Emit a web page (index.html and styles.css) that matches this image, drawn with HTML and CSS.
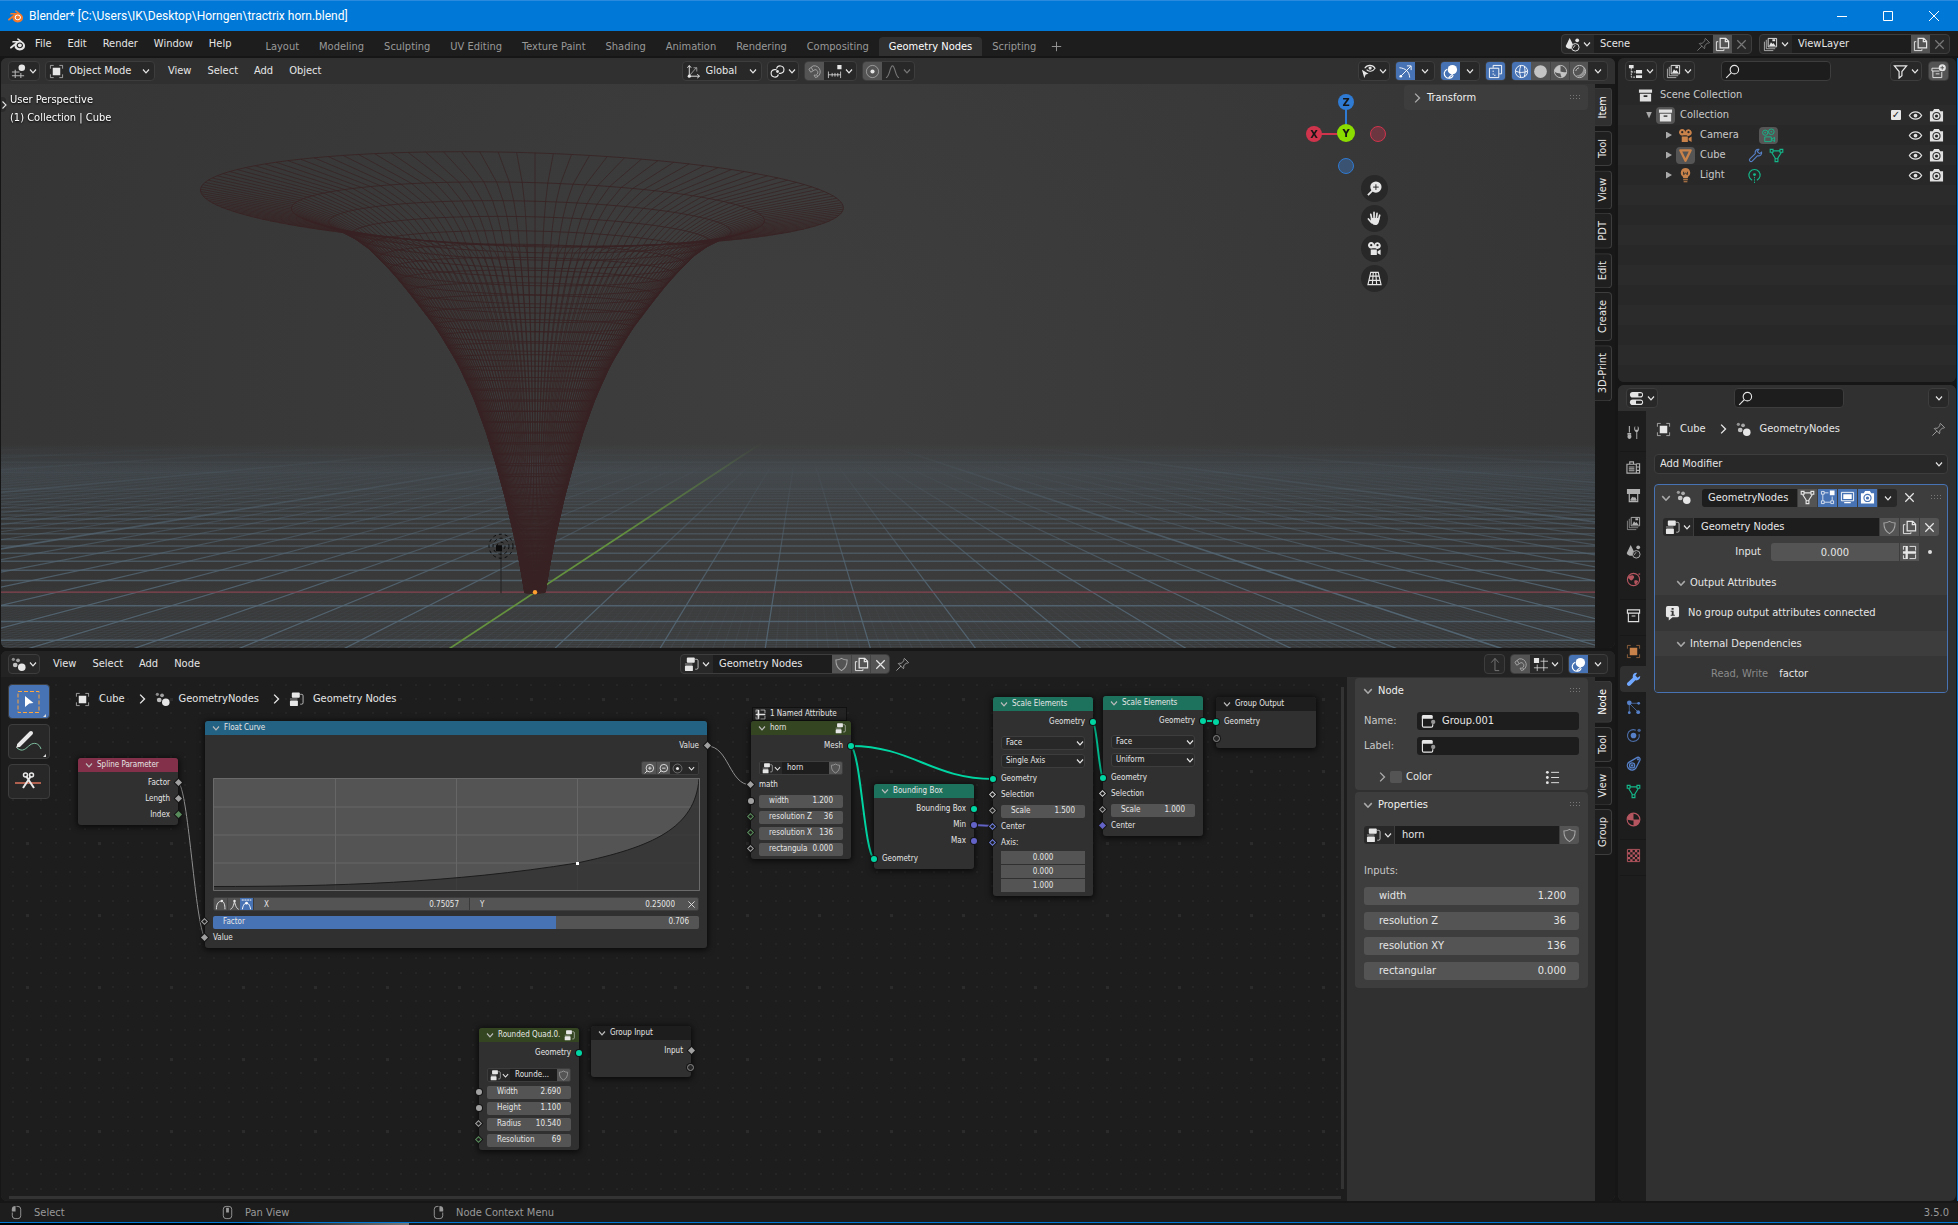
FILE: index.html
```html
<!DOCTYPE html>
<html lang="en">
<head>
  <meta charset="UTF-8">
  <meta name="viewport" content="width=device-width, initial-scale=1.0">
  <title>Blender* [C:\Users\IK\Desktop\Horngen\tractrix horn.blend]</title>
  <link rel="stylesheet" href="styles.css">
</head>
<body>

  <!-- Icon sprite -->
  <svg class="sprite" aria-hidden="true">
    <symbol id="i-blender" viewBox="0 0 24 24" fill="currentColor"><path d="M12.51 13.214c.046-.8.438-1.506 1.03-2.006a3.424 3.424 0 0 1 2.212-.79c.85 0 1.631.3 2.211.79.592.5.983 1.206 1.028 2.005.045.823-.285 1.586-.865 2.153a3.389 3.389 0 0 1-2.374.938 3.393 3.393 0 0 1-2.376-.938c-.58-.567-.91-1.33-.865-2.152M7.35 14.831c.006.314.106.922.256 1.398a7.372 7.372 0 0 0 1.593 2.757 8.227 8.227 0 0 0 2.787 2.001 8.947 8.947 0 0 0 3.66.76 8.964 8.964 0 0 0 3.657-.772 8.285 8.285 0 0 0 2.785-2.01 7.428 7.428 0 0 0 1.592-2.762 6.964 6.964 0 0 0 .25-3.074 7.123 7.123 0 0 0-1.016-2.779 7.764 7.764 0 0 0-1.852-2.043h.002L13.566 2.55l-.02-.015c-.492-.378-1.319-.376-1.86.002-.547.382-.609 1.015-.123 1.415l-.001.001 3.126 2.543-9.53.01h-.013c-.788.001-1.545.518-1.695 1.172-.154.665.38 1.217 1.2 1.22V8.9l4.83-.01-8.62 6.617-.034.025c-.813.622-1.075 1.658-.563 2.313.52.667 1.625.668 2.447.004L7.414 14s-.069.52-.063.831zm12.09 1.741c-.97.988-2.326 1.548-3.795 1.55-1.47.004-2.827-.552-3.797-1.538a4.51 4.51 0 0 1-1.036-1.622 4.282 4.282 0 0 1 .282-3.519 4.702 4.702 0 0 1 1.153-1.371c.942-.768 2.141-1.183 3.396-1.185 1.256-.002 2.455.41 3.398 1.175.48.391.87.854 1.152 1.367a4.28 4.28 0 0 1 .522 1.706 4.236 4.236 0 0 1-.239 1.811 4.54 4.54 0 0 1-1.035 1.626"/></symbol>
    <symbol id="i-down" viewBox="0 0 8 8" fill="none" stroke="currentColor" stroke-width="1.2"><path d="M1 2.5 4 5.8 7 2.5"/></symbol>
    <symbol id="i-right" viewBox="0 0 8 8" fill="none" stroke="currentColor" stroke-width="1.1"><path d="M2.5.5 6 4 2.5 7.5"/></symbol>
    <symbol id="i-x" viewBox="0 0 16 16" fill="none" stroke="currentColor" stroke-width="1.3"><path d="m3.500 3.500 9 9M12.500 3.500l-9 9"/></symbol>
    <symbol id="i-plus" viewBox="0 0 16 16" fill="none" stroke="currentColor"><path d="M8 3v10M3 8h10"/></symbol>
    <symbol id="i-view3d" viewBox="0 0 16 16" fill="none" stroke="currentColor" stroke-width="1.1"><path d="M1 8.500h8M1 12.500h13M4.500 6v9M10.500 9.500v5.500" opacity=".75"/><circle cx="11.500" cy="4" r="3.500" fill="currentColor" stroke="none"/></symbol>
    <symbol id="i-object" viewBox="0 0 16 16" fill="none" stroke="currentColor"><path d="M1.500 5V1.500H5M11 1.500h3.500V5M14.500 11v3.500H11M5 14.500H1.500V11" opacity=".65"/><path d="M4 4h8v8H4z" fill="currentColor" stroke="none"/></symbol>
    <symbol id="i-axes" viewBox="0 0 16 16" fill="none" stroke="currentColor"><path d="M3.500 13V2M1.500 4l2-2.500 2 2.500M3.500 13H14M12 11l2.500 2-2.500 2"/><path d="m4 12 7-8M8 4h3.500v4" opacity=".6"/><circle cx="3.500" cy="13" r="1.700" fill="currentColor" stroke="none"/></symbol>
    <symbol id="i-pivot" viewBox="0 0 16 16" fill="none" stroke="currentColor" stroke-width="1.200"><path d="M7 5a4 4 0 1 1 4.500 5H9.500M9 11.200A4 4 0 1 1 4.500 6H7"/><circle cx="8" cy="8" r="1.500" fill="currentColor" stroke="none"/></symbol>
    <symbol id="i-magnet" viewBox="0 0 16 16" fill="none" stroke="currentColor"><path d="M2 5.500 6.500 2A6 6 0 1 1 9 14.500L7.500 11.800A3 3 0 1 0 8.500 6L4 8.800zM4.500 3.500 6.300 7M10.500 11.500l1 2.500"/></symbol>
    <symbol id="i-incr" viewBox="0 0 16 16" fill="none" stroke="currentColor"><path d="M1.500 8v7M5.500 9.500v4M8.500 9.500v4M11.500 9.500v4M14.500 8v7M1.500 11.500h13" opacity=".8"/><path d="M11 1h4.500v4.500H11z" fill="currentColor" stroke="none"/></symbol>
    <symbol id="i-prop" viewBox="0 0 16 16" fill="none" stroke="currentColor"><circle cx="8" cy="8" r="6.500" opacity=".5"/><circle cx="8" cy="8" r="2.200" fill="currentColor" stroke="none"/></symbol>
    <symbol id="i-falloff" viewBox="0 0 16 16" fill="none" stroke="currentColor" stroke-width="1.200"><path d="M1 14.500c4 0 4-12.500 7-12.500s3 12.500 7 12.500"/></symbol>
    <symbol id="i-vis" viewBox="0 0 16 16" fill="none" stroke="currentColor" stroke-width="1.200"><path d="M4 4.500c2.500-4 8.500-4 11 0-2.500 4-7 4-9 1.500"/><circle cx="9.700" cy="4.300" r="1.700" fill="currentColor" stroke="none"/><path d="m1 6 7 4.500-3 .8L3.500 15z" fill="currentColor" stroke="none"/></symbol>
    <symbol id="i-gizmo" viewBox="0 0 16 16" fill="none" stroke="currentColor"><path d="M1.500 4C8 4.500 12 8 12.500 14.500M2 14 13.500 2.500M9.500 2h4.500v4.500"/><circle cx="3" cy="13" r="1.400" fill="currentColor" stroke="none"/></symbol>
    <symbol id="i-overlay" viewBox="0 0 16 16" fill="none" stroke="currentColor" stroke-width="1.200"><circle cx="10" cy="6" r="5" fill="currentColor" stroke="none"/><path d="M4.500 5.500A5 5 0 1 0 11 12M6 14.500l4.500-4" /></symbol>
    <symbol id="i-xray" viewBox="0 0 16 16" fill="none" stroke="currentColor"><path d="M5.500 4V1.500h9v9H12M1.500 4.500h10v10h-10z"/><path d="M5.500 7v5h4" stroke-dasharray="1.500 1.500"/></symbol>
    <symbol id="i-wire" viewBox="0 0 16 16" fill="none" stroke="currentColor"><circle cx="8" cy="8" r="6.500"/><path d="M1.500 7.500c4 2 9 2 13 0M7.500 1.500c-2 4-2 9 0 13M11 2.500c1 3 1 8 0 11" /></symbol>
    <symbol id="i-solid" viewBox="0 0 16 16" fill="#c4c4c4"><circle cx="8" cy="8" r="6.800"/></symbol>
    <symbol id="i-mat" viewBox="0 0 16 16" fill="none" stroke="#c4c4c4"><circle cx="8" cy="8" r="6.500"/><path d="M8 8V1.500A6.500 6.500 0 0 0 1.500 8c2 1.500 4 2 6.500 2 0 2 1 4 2.500 4.500 2-1 4-3 4-6C13 9 10 9 8 8z" fill="#c4c4c4" stroke="none"/></symbol>
    <symbol id="i-rend" viewBox="0 0 16 16" fill="none" stroke="#c4c4c4"><circle cx="8" cy="8" r="6.500"/><path d="M12 3a6 6 0 1 1-8 9c5 1 9-4 8-9z" fill="#c4c4c4" stroke="none" opacity=".6"/><path d="M4 7.500c.5-2 2-3 3.500-3.500"/></symbol>
    <symbol id="i-scene" viewBox="0 0 16 16" fill="none" stroke="currentColor"><path d="M5 1 .8 9.500c0 3 6.200 4 7.200 2L8.500 8z" fill="currentColor" stroke="none"/><circle cx="13" cy="3.500" r="2" fill="currentColor" stroke="none"/><circle cx="11" cy="11" r="4" fill="#262626"/><path d="M9 11.500c.2-1.200.8-2 2-2.300"/></symbol>
    <symbol id="i-pin" viewBox="0 0 16 16" fill="none" stroke="currentColor"><path d="m1.500 14.500 5-5M3.500 7l5.500 5.500c.5-1 .5-2 .2-3L12 6.500c1 .2 2 0 2.500-.5L10 1.500c-.5.500-.7 1.500-.5 2.500L6.500 6.800c-1-.3-2-.3-3 .2z"/></symbol>
    <symbol id="i-dup" viewBox="0 0 16 16" fill="none" stroke="currentColor"><path d="M3.500 5h-2v9.500h8V13"/><path d="M5.500 1.500h6l3 3v7h-9zM11 1.500V5h3.500" stroke-width="1.300"/></symbol>
    <symbol id="i-layers" viewBox="0 0 16 16" fill="none" stroke="currentColor"><path d="M1.500 5v9.500H11M3.500 3v9.500H13" opacity=".7"/><path d="M5.500 1.500h9v9h-9z"/><path d="m6.500 9.500 2-4 1.500 2 1-1 2.500 3zM10 2.500h3v2h-3z" fill="currentColor" stroke="none"/></symbol>
    <symbol id="i-tree" viewBox="0 0 16 16" fill="currentColor"><path d="M1 1h5v3.500H1zM8.500 6.500H15V10H8.500zM8.500 12H15v3H8.500z"/><path d="M3.500 4v10H8M3.500 8.500H8" fill="none" stroke="currentColor" stroke-dasharray="2 1"/></symbol>
    <symbol id="i-search" viewBox="0 0 16 16" fill="none" stroke="currentColor" stroke-width="1.200"><circle cx="10" cy="6" r="4.500"/><path d="m6.800 9.200-5.500 5.500"/></symbol>
    <symbol id="i-filter" viewBox="0 0 16 16" fill="none" stroke="currentColor" stroke-width="1.300"><path d="M1.500 2h13l-5 6v4.500L6.500 15V8z"/></symbol>
    <symbol id="i-newcoll" viewBox="0 0 16 16" fill="none" stroke="currentColor"><path d="M9 4.500H1v3h8M2 7.500v7h9.500v-6M5 10.500h4"/><circle cx="12" cy="4" r="3.800" fill="currentColor" stroke="none"/><path d="M12 2v4M10 4h4" stroke="#555"/></symbol>
    <symbol id="i-coll" viewBox="0 0 16 16" fill="currentColor"><path d="M1 1.500h14v3.500H1z"/><path fill-rule="evenodd" d="M2 6h12v8.500H2zm4 1.800v1.700h4V7.800z"/></symbol>
    <symbol id="i-archive" viewBox="0 0 16 16" fill="none" stroke="currentColor" stroke-width="1.200"><path d="M1.500 2h13v3.500h-13zM2.500 5.500v9h11v-9M6 8.500h4"/></symbol>
    <symbol id="i-cam" viewBox="0 0 16 16" fill="currentColor"><path fill-rule="evenodd" d="M4.500 1a3.500 3.500 0 1 0 1.500 6.700h3A3.500 3.500 0 1 0 7.700 4.500 3.500 3.500 0 0 0 4.500 1zm0 2.300a1.200 1.200 0 1 1 0 2.400 1.200 1.200 0 0 1 0-2.400zm6.700 0a1.200 1.200 0 1 1 0 2.400 1.200 1.200 0 0 1 0-2.400z"/><path d="M4 9h6.500v6H4zM11.300 11l3.200-2v6l-3.200-2z"/></symbol>
    <symbol id="i-camdata" viewBox="0 0 16 16" fill="none" stroke="currentColor"><circle cx="4.500" cy="5" r="2.800"/><circle cx="11" cy="4" r="3"/><circle cx="4.500" cy="5" r=".5"/><circle cx="11" cy="4" r=".5"/><path d="M4 9.500h7v5H4zM11 12l3.500-2v4.500z"/></symbol>
    <symbol id="i-objmesh" viewBox="0 0 16 16" fill="none" stroke="currentColor" stroke-width="2.500"><path d="M2.500 2.500h11L8 13.500z" stroke-linejoin="round"/></symbol>
    <symbol id="i-mesh" viewBox="0 0 16 16" fill="none" stroke="currentColor" stroke-width="1.200"><path d="M4.500 3h7M3 5l4 6.500M13 5l-4 6.500M1.300 1.500h3v3h-3zM11.700 1.500h3v3h-3zM6.500 11.500h3v3h-3z"/></symbol>
    <symbol id="i-wrench" viewBox="0 0 16 16" fill="currentColor"><path d="M15 4.200 12.300 6 10 3.800 11.800 1C9 .4 6.500 3 7.300 6L1.500 11.500c-1.600 2 .8 4.500 3 3L10 8.800c3.200.8 5.700-1.800 5-4.600z"/></symbol>
    <symbol id="i-wrenchline" viewBox="0 0 16 16" fill="none" stroke="currentColor" stroke-width="1.200"><path d="M14.500 4.500 12.300 6 10 3.800 11.500 1.500C9 1 7 3.500 7.800 6L2 11.500c-1.500 1.700.8 4 2.500 2.500L10 8.300c3 .7 5-1.500 4.500-3.800z"/></symbol>
    <symbol id="i-bulb" viewBox="0 0 16 16" fill="currentColor"><path d="M8 0a5 5 0 0 0-3 9l.7 2h4.600L11 9a5 5 0 0 0-3-9z"/><path d="M5.500 12h5v1h-5zM6 14h4v1.200H6z"/><path d="M6 4v3l2-1.500L10 7V4" fill="none" stroke="#2b2b2b"/></symbol>
    <symbol id="i-light" viewBox="0 0 16 16" fill="none" stroke="currentColor"><path d="M5.500 13a6 6 0 1 1 5 0" stroke-width="1.200"/><circle cx="8" cy="7" r="1.500" fill="currentColor" stroke="none"/><path d="M8 9.500v1.500M8 12v1.500M8 14.500V16"/></symbol>
    <symbol id="i-eye" viewBox="0 0 16 16" fill="none" stroke="currentColor" stroke-width="1.400"><path d="M1.500 8C4.500 2.800 11.500 2.800 14.500 8c-3 5.200-10 5.200-13 0z"/><circle cx="8" cy="8" r="2" fill="currentColor" stroke="none"/></symbol>
    <symbol id="i-photo" viewBox="0 0 16 16" fill="currentColor"><path d="M1 3.500h3L5.500 1h5L12 3.500h3v11H1z"/><circle cx="8" cy="8.500" r="3.800" fill="none" stroke="#2b2b2b" stroke-width="1.100"/><circle cx="8" cy="8.500" r="1.700" fill="#2b2b2b"/></symbol>
    <symbol id="i-photo-on" viewBox="0 0 16 16" fill="currentColor"><path d="M1 3.500h3L5.500 1h5L12 3.500h3v11H1z"/><circle cx="8" cy="8.500" r="3.800" fill="none" stroke="#4772b3" stroke-width="1.200"/><circle cx="8" cy="8.500" r="1.700" fill="#4772b3"/></symbol>
    <symbol id="i-props" viewBox="0 0 16 16" fill="currentColor"><rect x="1" y="1" width="14" height="6" rx="3"/><rect x="1" y="9" width="14" height="6" rx="3"/><path d="M10 2.500h2.500a1.500 1.500 0 0 1 0 3H10zM7.500 10.500h5a1.500 1.500 0 0 1 0 3h-5z" fill="#262626"/></symbol>
    <symbol id="i-tool" viewBox="0 0 16 16" fill="currentColor"><path d="M3 1h1.200v7H3zM1.500 8.500h4v2h-4z"/><path d="M2 10.500h3.300c1 2 .5 4.500-1.600 4.500S1 12.500 2 10.500zM11 15V7.500C8.500 6.500 8 3 9.800 1v4h2.700V1c2 2 1.500 5.500-.5 6.500V15z"/></symbol>
    <symbol id="i-render" viewBox="0 0 16 16" fill="none" stroke="currentColor" stroke-width="1.200"><path d="M1 4.500h10v9.500H1zM4 4V2h4v2M11 4h3.500v10H11M3 7.500h6M3 9.500h6M3 11.500h6M11 7.500h3.500M11 11h3.500"/></symbol>
    <symbol id="i-output" viewBox="0 0 16 16" fill="none" stroke="currentColor"><path d="M1 1h14v5.500H1z" fill="currentColor" stroke="none"/><path d="M3.500 6v8.500h9V6" stroke-width="1.300"/><path d="m5 13 2-3.500 1.500 1.500 1-1 1.500 3z" fill="currentColor"/></symbol>
    <symbol id="i-world" viewBox="0 0 16 16" fill="none" stroke="currentColor" stroke-width="1.200"><circle cx="8" cy="8" r="6.500"/><path d="M3 4c2 0 4-1 5 0s1 2 0 3-1 2-2.500 2S3.500 7 2 6.500zM9 9c1.500-.5 3.500 0 4 1l-2.500 3.500C9 13 8.500 10.500 9 9zM13.500 1l2 1-2 1.500z" fill="currentColor" stroke="none"/></symbol>
    <symbol id="i-particles" viewBox="0 0 16 16" fill="none" stroke="currentColor"><path d="M3.500 3.500h10M3.500 3.500V14M4 4l9 9" opacity=".7"/><circle cx="3.500" cy="3" r="2.500" fill="currentColor" stroke="none"/><circle cx="13" cy="13" r="2" fill="currentColor" stroke="none"/><circle cx="13.500" cy="3.500" r="1.500" fill="currentColor" stroke="none"/><circle cx="3.500" cy="13.500" r="1.500" fill="currentColor" stroke="none"/></symbol>
    <symbol id="i-physics" viewBox="0 0 16 16" fill="none" stroke="currentColor"><path d="M10.500 2.300A6.300 6.300 0 1 0 14 6.500" stroke-width="1.200" opacity=".8"/><circle cx="8" cy="8" r="3" fill="currentColor" stroke="none"/><circle cx="14" cy="2.500" r="1.800" fill="currentColor" stroke="none" opacity=".7"/></symbol>
    <symbol id="i-constraint" viewBox="0 0 16 16" fill="none" stroke="currentColor" stroke-width="1.400"><path d="M2.500 7 12 1.500c2-.7 3.500 1 2.800 3L10.500 13A5 5 0 1 1 2.500 7z"/><circle cx="6.500" cy="10" r="2.700"/><circle cx="6.500" cy="10" r=".6"/><circle cx="12.800" cy="3.500" r=".5"/></symbol>
    <symbol id="i-material" viewBox="0 0 16 16" fill="none" stroke="currentColor" stroke-width="1.200"><circle cx="8" cy="8" r="6.800"/><path d="M8 8V1.200A6.800 6.800 0 0 0 1.200 8c2.500 1 4.500 1 6.800 1v5.800A6.800 6.800 0 0 0 14.800 8z" fill="currentColor" stroke="none"/></symbol>
    <symbol id="i-texture" viewBox="0 0 16 16" fill="currentColor"><path d="M1.500 1.500h13v13h-13z" fill="none" stroke="currentColor"/><path d="M4.500 2h2.500v2.500H4.500zM9.500 2H12v2.500H9.500zM2 4.500h2.500V7H2zM7 4.500h2.500V7H7zM12 4.500h2.500V7H12zM4.500 7H7v2.500H4.500zM9.500 7H12v2.500H9.500zM2 9.500h2.500V12H2zM7 9.500h2.500V12H7zM12 9.500h2.500V12H12zM4.500 12H7v2.500H4.500zM9.500 12H12v2.500H9.500z"/></symbol>
    <symbol id="i-geo" viewBox="0 0 16 16" fill="currentColor"><circle cx="11.500" cy="11" r="4"/><circle cx="4.500" cy="8.500" r="2.500" opacity=".8"/><circle cx="2.500" cy="2.500" r="1.700" opacity=".55"/><circle cx="7.500" cy="3.500" r="2" opacity=".65"/></symbol>
    <symbol id="i-nodetree" viewBox="0 0 16 16" fill="currentColor"><rect x="3" y="0.500" width="8.500" height="5.500" rx="1"/><rect x="1" y="9" width="8.500" height="6" rx="1"/><path d="M1 7h8v1H1z" opacity=".6"/><path d="M12 2.500h1.500q1.500 0 1.500 1.500v7.500q0 1.500-1.500 1.500H12" fill="none" stroke="currentColor" opacity=".8"/></symbol>
    <symbol id="i-shield" viewBox="0 0 16 16" fill="none" stroke="currentColor" stroke-width="1.100"><path d="M8 1.500c2 1.300 4 1.800 6 1.800 0 5.500-1.500 9-6 11.200-4.500-2.200-6-5.700-6-11.200 2 0 4-.5 6-1.800z"/></symbol>
    <symbol id="i-attr" viewBox="0 0 16 16" fill="none" stroke="currentColor"><path d="M5 1v14M1 8h14" stroke-width="2.500"/><path d="M1 1.500h3M1 14.500h3M8 1.500h6.500V6M8 14.500h6.500V10M1.500 2v3M1.500 11v3"/></symbol>
    <symbol id="i-info" viewBox="0 0 16 16" fill="currentColor"><path fill-rule="evenodd" d="M3 0h10q2 0 2 2v8q0 2-2 2H8l-4 3.500V12H3q-2 0-2-2V2q0-2 2-2zm4 2v2h2.200V2zm-1 3v1.200h1.200v3H6v1.300h4.500V9.200H9.200V5z"/></symbol>
    <symbol id="i-editmode" viewBox="0 0 16 16" fill="none" stroke="currentColor"><path d="M3 5v6M5 13h6M13 7v4M5 3h4M1.500 1.500h3v3h-3zM1.500 11.500h3v3h-3zM11.500 11.500h3v3h-3z" opacity=".8"/><path d="M10.500.500h5v5h-5z" fill="currentColor" stroke="none"/></symbol>
    <symbol id="i-monitor" viewBox="0 0 16 16" fill="none" stroke="currentColor"><path d="M1.500 2.500h13v9h-13z"/><path d="M3.500 4.500h9v5h-9z" fill="currentColor" stroke="none"/><path d="M4.500 13.500h7" stroke-width="1.500"/></symbol>
    <symbol id="i-list" viewBox="0 0 16 16" fill="none" stroke="currentColor"><path d="M6.500 2.500H15M6.500 8H15M6.500 13.500H15"/><circle cx="2.500" cy="2.500" r="1.500" fill="currentColor" stroke="none"/><circle cx="2.500" cy="8" r="1.500" fill="currentColor" stroke="none"/><circle cx="2.500" cy="13.500" r="1.500" fill="currentColor" stroke="none"/></symbol>
    <symbol id="i-node" viewBox="0 0 16 16" fill="none" stroke="currentColor" stroke-width="1.200"><path d="M1.500 3v9.500q0 1.500 1.500 1.500h8q1.500 0 1.500-1.500V11"/><path d="M1 5V2.500Q1 1 2.500 1h8.500q1.500 0 1.500 1.500V5z" fill="currentColor" stroke="none"/><circle cx="13" cy="8.500" r="2.300" fill="currentColor" stroke="none" opacity=".6"/></symbol>
    <symbol id="i-up" viewBox="0 0 16 16" fill="none" stroke="currentColor"><path d="M13 14.500H8.500V1.500M4.500 6l4-4.500 4 4.500"/></symbol>
    <symbol id="i-snapnode" viewBox="0 0 16 16" fill="none" stroke="currentColor"><path d="M8 4.500h8M1 11.500h15M4.500 8v7M11.500 1v14" opacity=".8"/><path d="M1 1h5.500v5.500H1z" fill="currentColor" stroke="none"/></symbol>
    <symbol id="i-mouse-l" viewBox="0 0 16 16" fill="none" stroke="currentColor"><path d="M8 1.500h1.500q3 0 3 3v7q0 3-3 3h-3q-3 0-3-3V8"/><path d="M3 7V4.500Q3 1 7 1v6z" fill="currentColor" stroke="none"/></symbol>
    <symbol id="i-mouse-m" viewBox="0 0 16 16" fill="none" stroke="currentColor"><rect x="3.500" y="1.500" width="9" height="13" rx="3"/><rect x="6.500" y="3" width="3" height="5" fill="currentColor" stroke="none"/></symbol>
    <symbol id="i-mouse-r" viewBox="0 0 16 16" fill="none" stroke="currentColor"><path d="M8 1.500H6.500q-3 0-3 3v7q0 3 3 3h3q3 0 3-3V8"/><path d="M13 7V4.500Q13 1 9 1v6z" fill="currentColor" stroke="none"/></symbol>
    <symbol id="i-zoom" viewBox="0 0 16 16" fill="currentColor"><circle cx="9.500" cy="6.500" r="6"/><path d="m1 15 5-5" stroke="currentColor" stroke-width="2"/><path d="M9.500 3.500v6M6.500 6.500h6" stroke="#222"/></symbol>
    <symbol id="i-hand" viewBox="0 0 16 16" fill="none" stroke="currentColor" stroke-width="1.800" stroke-linecap="round"><path d="M5 8 4 3.500M7.500 7V1.500M10 7.500l.7-5M12.300 9l1.200-4.500M1.500 8.500l3.500 4"/><path d="M4 7.500h9.200c0 4-1 7.500-4.200 7.500-3 0-4-2-5-4z" fill="currentColor" stroke="none"/></symbol>
    <symbol id="i-persp" viewBox="0 0 16 16" fill="none" stroke="currentColor" stroke-width="1.200"><path d="M4 1.500h8l3 13H1zM3 5.500h10M2 10h12M6.700 1.500l-1 13M9.300 1.500l1 13"/></symbol>
    <symbol id="i-zoomin" viewBox="0 0 16 16" fill="none" stroke="currentColor" stroke-width="1.300"><circle cx="8.500" cy="7.500" r="5.500"/><path d="M8.500 5v5M6 7.500h5M1 15l3.500-3.500"/></symbol>
    <symbol id="i-zoomout" viewBox="0 0 16 16" fill="none" stroke="currentColor" stroke-width="1.300"><circle cx="8.500" cy="7.500" r="5.500"/><path d="M6 7.500h5M1 15l3.500-3.500"/></symbol>
    <symbol id="i-handle1" viewBox="0 0 16 16" fill="none" stroke="currentColor" stroke-width="1.400"><path d="M2 15C2 7 5 3 10 3c3 1 4.500 5 4.500 12"/><circle cx="10" cy="3" r="1.800" fill="currentColor" stroke="none"/></symbol>
    <symbol id="i-handle2" viewBox="0 0 16 16" fill="none" stroke="currentColor" stroke-width="1.400"><path d="M2 15c3-1 5-6 6-12 1 6 3 11 6 12"/><circle cx="8" cy="3" r="1.800" fill="currentColor" stroke="none"/></symbol>
    <symbol id="i-handle3" viewBox="0 0 16 16" fill="none" stroke="currentColor" stroke-width="1.400"><path d="M2 15c1-6 3-9 6-9s5 3 6 9"/><path d="M1 1.500h14" stroke-dasharray="3 1"/><circle cx="8" cy="6" r="2" fill="currentColor" stroke="none"/></symbol>
    <symbol id="i-grip" viewBox="0 0 12 5" fill="currentColor"><path d="M0 0h1v1H0zM3 0h1v1H3zM6 0h1v1H6zM9 0h1v1H9zM0 3h1v1H0zM3 3h1v1H3zM6 3h1v1H6zM9 3h1v1H9z"/></symbol>
  </svg>

  <!-- Window title bar -->
  <div class="titlebar">
    <svg class="ic logo" viewBox="0 0 24 24"><circle cx="15.500" cy="13.500" r="5.500" fill="#fff"/><circle cx="15.500" cy="13.500" r="2.800" fill="#265787"/><use href="#i-blender" class="orange"/></svg>
    <span class="title">Blender* [C:\Users\IK\Desktop\Horngen\tractrix horn.blend]</span>
    <button type="button" aria-label="Minimize"><svg viewBox="0 0 10 10"><path d="M0 5.500h10"/></svg></button>
    <button type="button" aria-label="Maximize"><svg viewBox="0 0 10 10"><path d="M.5.5h9v9h-9z"/></svg></button>
    <button type="button" aria-label="Close"><svg viewBox="0 0 10 10"><path d="m0 0 10 10M10 0 0 10"/></svg></button>
  </div>

  <!-- Top bar -->
  <div class="topbar">
    <svg class="ic"><use href="#i-blender"/></svg>
    <nav class="menu">
      <button type="button">File</button>
      <button type="button">Edit</button>
      <button type="button">Render</button>
      <button type="button">Window</button>
      <button type="button">Help</button>
    </nav>
    <nav class="workspaces">
      <button type="button">Layout</button>
      <button type="button">Modeling</button>
      <button type="button">Sculpting</button>
      <button type="button">UV Editing</button>
      <button type="button">Texture Paint</button>
      <button type="button">Shading</button>
      <button type="button">Animation</button>
      <button type="button">Rendering</button>
      <button type="button">Compositing</button>
      <button type="button" class="active">Geometry Nodes</button>
      <button type="button">Scripting</button>
      <button type="button" class="add" aria-label="Add workspace"><svg class="ic"><use href="#i-plus"/></svg></button>
    </nav>
    <div class="group id-block">
      <button type="button" class="drop" aria-label="Browse scene"><svg class="ic"><use href="#i-scene"/></svg><svg class="chev"><use href="#i-down"/></svg></button>
      <input type="text" value="Scene" aria-label="Scene name">
      <button type="button" class="pin" aria-label="Pin scene"><svg class="ic"><use href="#i-pin"/></svg></button>
      <button type="button" class="gray" aria-label="New scene"><svg class="ic"><use href="#i-dup"/></svg></button>
      <button type="button" class="off" aria-label="Delete scene"><svg class="ic"><use href="#i-x"/></svg></button>
    </div>
    <div class="group id-block">
      <button type="button" class="drop" aria-label="Browse view layer"><svg class="ic"><use href="#i-layers"/></svg><svg class="chev"><use href="#i-down"/></svg></button>
      <input type="text" value="ViewLayer" aria-label="View layer name">
      <button type="button" class="gray" aria-label="New view layer"><svg class="ic"><use href="#i-dup"/></svg></button>
      <button type="button" class="off" aria-label="Delete view layer"><svg class="ic"><use href="#i-x"/></svg></button>
    </div>
  </div>

  <div class="screen">
    <div class="column left">

      <!-- 3D viewport -->
      <section class="area view3d">
        <header class="bar">
          <div class="side">
            <button type="button" class="group drop" aria-label="Editor type"><svg class="ic"><use href="#i-view3d"/></svg><svg class="chev"><use href="#i-down"/></svg></button>
            <div class="group pick mode">
              <svg class="ic"><use href="#i-object"/></svg>
              <select aria-label="Mode"><option>Object Mode</option><option>Edit Mode</option></select>
              <svg class="chev"><use href="#i-down"/></svg>
            </div>
            <nav class="menu">
              <button type="button">View</button>
              <button type="button">Select</button>
              <button type="button">Add</button>
              <button type="button">Object</button>
            </nav>
          </div>
          <div class="mid">
            <div class="group pick orient">
              <svg class="ic"><use href="#i-axes"/></svg>
              <select aria-label="Orientation"><option>Global</option><option>Local</option></select>
              <svg class="chev"><use href="#i-down"/></svg>
            </div>
            <button type="button" class="group drop" aria-label="Pivot"><svg class="ic"><use href="#i-pivot"/></svg><svg class="chev"><use href="#i-down"/></svg></button>
            <div class="group">
              <button type="button" class="gray dim" aria-label="Snap"><svg class="ic"><use href="#i-magnet"/></svg></button>
              <button type="button" class="drop" aria-label="Snap target"><svg class="ic"><use href="#i-incr"/></svg><svg class="chev"><use href="#i-down"/></svg></button>
            </div>
            <div class="group">
              <button type="button" class="gray" aria-label="Proportional editing"><svg class="ic"><use href="#i-prop"/></svg></button>
              <button type="button" class="drop off" aria-label="Falloff"><svg class="ic"><use href="#i-falloff"/></svg><svg class="chev"><use href="#i-down"/></svg></button>
            </div>
          </div>
          <div class="side end">
            <button type="button" class="group drop" aria-label="Visibility"><svg class="ic"><use href="#i-vis"/></svg><svg class="chev"><use href="#i-down"/></svg></button>
            <div class="group">
              <button type="button" class="on" aria-label="Gizmos"><svg class="ic"><use href="#i-gizmo"/></svg></button>
              <button type="button" aria-label="Gizmo options"><svg class="chev"><use href="#i-down"/></svg></button>
            </div>
            <div class="group">
              <button type="button" class="on" aria-label="Overlays"><svg class="ic"><use href="#i-overlay"/></svg></button>
              <button type="button" aria-label="Overlay options"><svg class="chev"><use href="#i-down"/></svg></button>
            </div>
            <div class="group"><button type="button" class="on" aria-label="X-ray"><svg class="ic"><use href="#i-xray"/></svg></button></div>
            <div class="group">
              <button type="button" class="on" aria-label="Wireframe"><svg class="ic"><use href="#i-wire"/></svg></button>
              <button type="button" class="gray" aria-label="Solid"><svg class="ic"><use href="#i-solid"/></svg></button>
              <button type="button" class="gray" aria-label="Material preview"><svg class="ic"><use href="#i-mat"/></svg></button>
              <button type="button" class="gray" aria-label="Rendered"><svg class="ic"><use href="#i-rend"/></svg></button>
              <button type="button" aria-label="Shading options"><svg class="chev"><use href="#i-down"/></svg></button>
            </div>
          </div>
        </header>
        <div class="area-body">
          <div class="scene">
            <canvas id="scene"></canvas>
            <button type="button" class="toggler" aria-label="Show toolbar"><svg class="chev"><use href="#i-right"/></svg></button>
            <p class="scene-info">User Perspective<br>(1) Collection | Cube</p>
            <svg class="axis-gizmo" viewBox="0 0 80 84">
              <path d="M40 42V11" stroke="#2f7ad2" stroke-width="2"/>
              <path d="M40 42H9" stroke="#d0344c" stroke-width="2"/>
              <circle cx="40" cy="10" r="8" fill="#2f7ad2"/>
              <circle cx="8" cy="42" r="8" fill="#d0344c"/>
              <circle cx="40" cy="41" r="9" fill="#8bdc00"/>
              <circle cx="72" cy="42" r="7.500" fill="#6c3640" stroke="#d0344c"/>
              <circle cx="40" cy="74" r="7.500" fill="#3a5373" stroke="#2f7ad2"/>
              <text x="40" y="14">Z</text>
              <text x="8" y="46">X</text>
              <text x="40" y="45">Y</text>
            </svg>
            <div class="nav-buttons">
              <button type="button" aria-label="Zoom"><svg class="ic"><use href="#i-zoom"/></svg></button>
              <button type="button" aria-label="Pan"><svg class="ic"><use href="#i-hand"/></svg></button>
              <button type="button" aria-label="Camera view"><svg class="ic"><use href="#i-cam"/></svg></button>
              <button type="button" aria-label="Perspective"><svg class="ic"><use href="#i-persp"/></svg></button>
            </div>
            <div class="transform panel-head"><svg class="fold"><use href="#i-right"/></svg><span>Transform</span><svg class="grip"><use href="#i-grip"/></svg></div>
          </div>
          <div class="tabs">
            <button type="button" class="active">Item</button>
            <button type="button">Tool</button>
            <button type="button">View</button>
            <button type="button">PDT</button>
            <button type="button">Edit</button>
            <button type="button">Create</button>
            <button type="button">3D-Print</button>
          </div>
        </div>
      </section>

      <!-- Geometry node editor -->
      <section class="area nodes">
        <header class="bar">
          <div class="side">
            <button type="button" class="group drop" aria-label="Editor type"><svg class="ic"><use href="#i-geo"/></svg><svg class="chev"><use href="#i-down"/></svg></button>
            <nav class="menu">
              <button type="button">View</button>
              <button type="button">Select</button>
              <button type="button">Add</button>
              <button type="button">Node</button>
            </nav>
          </div>
          <div class="mid">
            <div class="group id-block">
              <button type="button" class="drop" aria-label="Browse node tree"><svg class="ic"><use href="#i-nodetree"/></svg><svg class="chev"><use href="#i-down"/></svg></button>
              <input type="text" value="Geometry Nodes" aria-label="Node tree name">
              <button type="button" class="gray dim" aria-label="Fake user"><svg class="ic"><use href="#i-shield"/></svg></button>
              <button type="button" class="gray" aria-label="Duplicate"><svg class="ic"><use href="#i-dup"/></svg></button>
              <button type="button" class="gray" aria-label="Unlink"><svg class="ic"><use href="#i-x"/></svg></button>
            </div>
            <button type="button" class="bare" aria-label="Pin"><svg class="ic"><use href="#i-pin"/></svg></button>
          </div>
          <div class="side end">
            <div class="group"><button type="button" class="off" aria-label="Parent node tree"><svg class="ic"><use href="#i-up"/></svg></button></div>
            <div class="group">
              <button type="button" class="gray dim" aria-label="Snap"><svg class="ic"><use href="#i-magnet"/></svg></button>
              <button type="button" class="drop" aria-label="Snap target"><svg class="ic"><use href="#i-snapnode"/></svg><svg class="chev"><use href="#i-down"/></svg></button>
            </div>
            <div class="group">
              <button type="button" class="on" aria-label="Overlays"><svg class="ic"><use href="#i-overlay"/></svg></button>
              <button type="button" aria-label="Overlay options"><svg class="chev"><use href="#i-down"/></svg></button>
            </div>
          </div>
        </header>
        <div class="area-body">
          <div class="graph">
            <svg class="links">
              <defs>
                <pattern id="dots" x="25" y="21" width="72" height="72" patternUnits="userSpaceOnUse">
                  <path fill="#252525" d="M14 0h2v2h-2zM29 0h2v2h-2zM43 0h2v2h-2zM58 0h2v2h-2zM0 14h2v2H0zM14 14h2v2h-2zM29 14h2v2h-2zM43 14h2v2h-2zM58 14h2v2h-2zM0 29h2v2H0zM14 29h2v2h-2zM29 29h2v2h-2zM43 29h2v2h-2zM58 29h2v2h-2zM0 43h2v2H0zM14 43h2v2h-2zM29 43h2v2h-2zM43 43h2v2h-2zM58 43h2v2h-2zM0 58h2v2H0zM14 58h2v2h-2zM29 58h2v2h-2zM43 58h2v2h-2zM58 58h2v2h-2z"/>
                  <path fill="#2b2b2b" d="M0 0h3v3H0z"/>
                </pattern>
              </defs>
              <rect width="100%" height="100%" fill="url(#dots)"/>
              <g fill="none" stroke="#8f8f8f">
                <path d="M178 106C188 120 194 247 204 261"/>
                <path d="M706 69C728 69 728 108 750 108"/>
              </g>
              <g fill="none" stroke="#00d6a3" stroke-width="2">
                <path d="M850 69C910 69 932 102 992 102"/>
                <path d="M850 69C860 78 863 173 873 182"/>
                <path d="M1092 45C1096 50 1098 96 1102 101"/>
                <path d="M1202 44H1215"/>
              </g>
              <path d="M973 148 992 149" stroke="#6363c7" stroke-width="2"/>
            </svg>

            <div class="tools">
              <button type="button" class="active" aria-label="Select box">
                <svg viewBox="0 0 40 34"><path d="M9 6.500h21v21H9z" fill="none" stroke="#ffa63d" stroke-dasharray="4 2"/><path d="m16 11 8.500 7-4.200.5L16 22z" fill="#fff"/><path d="M37 29v3h-3z" fill="#ddd"/></svg>
              </button>
              <button type="button" aria-label="Annotate">
                <svg viewBox="0 0 40 34"><path d="m10 20 12-12" stroke="#e8e8e8" stroke-width="4" stroke-linecap="round"/><path d="m7 23 1.500-4 2.500 2.500z" fill="#e8e8e8"/><path d="M8 23c6 5 9 0 13-3s9-2 11 4" fill="none" stroke="#7fbf9f"/><path d="M37 29v3h-3z" fill="#ddd"/></svg>
              </button>
              <button type="button" aria-label="Links cut">
                <svg viewBox="0 0 40 34"><path d="M6 18h26" stroke="#b0604e" stroke-width="2"/><path d="m17 11 8 12M22 11l-8 12" stroke="#e8e8e8" stroke-width="2"/><circle cx="16.500" cy="10" r="2" fill="none" stroke="#e8e8e8" stroke-width="1.500"/><circle cx="22.500" cy="10" r="2" fill="none" stroke="#e8e8e8" stroke-width="1.500"/></svg>
              </button>
            </div>

            <div class="crumbs">
              <svg class="ic"><use href="#i-object"/></svg><span>Cube</span>
              <svg class="sep"><use href="#i-right"/></svg>
              <svg class="ic"><use href="#i-geo"/></svg><span>GeometryNodes</span>
              <svg class="sep"><use href="#i-right"/></svg>
              <svg class="ic"><use href="#i-nodetree"/></svg><span>Geometry Nodes</span>
            </div>

            <div class="node n-spline">
              <h3 class="red"><svg class="chev"><use href="#i-down"/></svg>Spline Parameter</h3>
              <div class="row out"><i class="sock diamond"></i>Factor</div>
              <div class="row out"><i class="sock diamond"></i>Length</div>
              <div class="row out"><i class="sock diamond green"></i>Index</div>
            </div>

            <div class="node n-curve">
              <h3 class="blue"><svg class="chev"><use href="#i-down"/></svg>Float Curve</h3>
              <div class="row out"><i class="sock diamond"></i>Value</div>
              <div class="row curve-tools">
                <div class="group">
                  <button type="button" class="gray" aria-label="Zoom in"><svg class="ic"><use href="#i-zoomin"/></svg></button>
                  <button type="button" class="gray" aria-label="Zoom out"><svg class="ic"><use href="#i-zoomout"/></svg></button>
                  <button type="button" aria-label="Clipping"><svg class="ic"><use href="#i-prop"/></svg></button>
                  <button type="button" aria-label="Curve options"><svg class="chev"><use href="#i-down"/></svg></button>
                </div>
              </div>
              <svg class="curve" viewBox="0 0 487 113" preserveAspectRatio="none">
                <path d="M122.500 0v113M243.500 0v113M364.500 0v113M0 29h487M0 57h487M0 85h487" fill="none" stroke="#666"/>
                <path d="M0 108.500C120 108.500 240 105 364 85C440 69 482 50 486 1V113H0z" fill="#2c2c2c" fill-opacity=".7"/>
                <path d="M0 108.500C120 108.500 240 105 364 85C440 69 482 50 486 1" fill="none" stroke="#1c1c1c"/>
                <path d="M.5.500h486v112H.500z" fill="none" stroke="#6a6a6a"/>
                <path d="M363 84h3v3h-3z" fill="#fff"/>
              </svg>
              <div class="row point">
                <div class="group">
                  <button type="button" class="gray" aria-label="Auto handle"><svg class="ic"><use href="#i-handle1"/></svg></button>
                  <button type="button" class="gray" aria-label="Vector handle"><svg class="ic"><use href="#i-handle2"/></svg></button>
                  <button type="button" class="on" aria-label="Auto clamped handle"><svg class="ic"><use href="#i-handle3"/></svg></button>
                  <label class="num"><span>X</span><input type="text" value="0.75057"></label>
                  <label class="num"><span>Y</span><input type="text" value="0.25000"></label>
                  <button type="button" class="gray" aria-label="Delete point"><svg class="ic"><use href="#i-x"/></svg></button>
                </div>
              </div>
              <div class="row in factor"><i class="sock diamond open"></i><label class="num slider"><span>Factor</span><input type="text" value="0.706"></label></div>
              <div class="row in"><i class="sock diamond"></i>Value</div>
            </div>

            <div class="node-tag"><svg class="ic"><use href="#i-attr"/></svg>1 Named Attribute</div>
            <div class="node n-horn">
              <h3 class="olive"><svg class="chev"><use href="#i-down"/></svg>horn<svg class="ic"><use href="#i-nodetree"/></svg></h3>
              <div class="row out"><i class="sock teal"></i>Mesh</div>
              <div class="row tree">
                <div class="group">
                  <button type="button" class="drop" aria-label="Browse group"><svg class="ic"><use href="#i-nodetree"/></svg><svg class="chev"><use href="#i-down"/></svg></button>
                  <input type="text" value="horn" aria-label="Group name">
                  <button type="button" class="gray dim" aria-label="Fake user"><svg class="ic"><use href="#i-shield"/></svg></button>
                </div>
              </div>
              <div class="row in"><i class="sock diamond"></i>math</div>
              <div class="row in"><i class="sock"></i><label class="num"><span>width</span><input type="text" value="1.200"></label></div>
              <div class="row in"><i class="sock diamond open green"></i><label class="num"><span>resolution Z</span><input type="text" value="36"></label></div>
              <div class="row in"><i class="sock diamond open green"></i><label class="num"><span>resolution X</span><input type="text" value="136"></label></div>
              <div class="row in"><i class="sock diamond open"></i><label class="num"><span>rectangula</span><input type="text" value="0.000"></label></div>
            </div>

            <div class="node n-bbox">
              <h3 class="green"><svg class="chev"><use href="#i-down"/></svg>Bounding Box</h3>
              <div class="row out"><i class="sock teal"></i>Bounding Box</div>
              <div class="row out"><i class="sock violet"></i>Min</div>
              <div class="row out"><i class="sock violet"></i>Max</div>
              <div class="row in spaced"><i class="sock teal"></i>Geometry</div>
            </div>

            <div class="node n-scale1">
              <h3 class="green"><svg class="chev"><use href="#i-down"/></svg>Scale Elements</h3>
              <div class="row out"><i class="sock teal"></i>Geometry</div>
              <div class="selects">
                <div class="pick"><select aria-label="Domain"><option>Face</option><option>Edge</option></select><svg class="chev"><use href="#i-down"/></svg></div>
                <div class="pick"><select aria-label="Scale mode"><option>Single Axis</option><option>Uniform</option></select><svg class="chev"><use href="#i-down"/></svg></div>
              </div>
              <div class="row in"><i class="sock teal"></i>Geometry</div>
              <div class="row in"><i class="sock diamond open light"></i>Selection</div>
              <div class="row in"><i class="sock diamond open"></i><label class="num"><span>Scale</span><input type="text" value="1.500"></label></div>
              <div class="row in"><i class="sock diamond open violet"></i>Center</div>
              <div class="row in"><i class="sock diamond open violet"></i>Axis:</div>
              <div class="vector">
                <input type="text" value="0.000" aria-label="Axis X">
                <input type="text" value="0.000" aria-label="Axis Y">
                <input type="text" value="1.000" aria-label="Axis Z">
              </div>
            </div>

            <div class="node n-scale2">
              <h3 class="green"><svg class="chev"><use href="#i-down"/></svg>Scale Elements</h3>
              <div class="row out"><i class="sock teal"></i>Geometry</div>
              <div class="selects">
                <div class="pick"><select aria-label="Domain"><option>Face</option><option>Edge</option></select><svg class="chev"><use href="#i-down"/></svg></div>
                <div class="pick"><select aria-label="Scale mode"><option>Uniform</option><option>Single Axis</option></select><svg class="chev"><use href="#i-down"/></svg></div>
              </div>
              <div class="row in"><i class="sock teal"></i>Geometry</div>
              <div class="row in"><i class="sock diamond open light"></i>Selection</div>
              <div class="row in"><i class="sock diamond open"></i><label class="num"><span>Scale</span><input type="text" value="1.000"></label></div>
              <div class="row in"><i class="sock diamond violet"></i>Center</div>
            </div>

            <div class="node n-output">
              <h3 class="black"><svg class="chev"><use href="#i-down"/></svg>Group Output</h3>
              <div class="row in"><i class="sock teal"></i>Geometry</div>
              <div class="row in"><i class="sock virtual"></i></div>
            </div>

            <div class="node n-quad">
              <h3 class="olive"><svg class="chev"><use href="#i-down"/></svg>Rounded Quad.0.<svg class="ic"><use href="#i-nodetree"/></svg></h3>
              <div class="row out"><i class="sock teal"></i>Geometry</div>
              <div class="row tree">
                <div class="group">
                  <button type="button" class="drop" aria-label="Browse group"><svg class="ic"><use href="#i-nodetree"/></svg><svg class="chev"><use href="#i-down"/></svg></button>
                  <input type="text" value="Rounde..." aria-label="Group name">
                  <button type="button" class="gray dim" aria-label="Fake user"><svg class="ic"><use href="#i-shield"/></svg></button>
                </div>
              </div>
              <div class="row in"><i class="sock"></i><label class="num"><span>Width</span><input type="text" value="2.690"></label></div>
              <div class="row in"><i class="sock"></i><label class="num"><span>Height</span><input type="text" value="1.100"></label></div>
              <div class="row in"><i class="sock diamond open"></i><label class="num"><span>Radius</span><input type="text" value="10.540"></label></div>
              <div class="row in"><i class="sock diamond open green"></i><label class="num"><span>Resolution</span><input type="text" value="69"></label></div>
            </div>

            <div class="node n-input">
              <h3 class="black"><svg class="chev"><use href="#i-down"/></svg>Group Input</h3>
              <div class="row out"><i class="sock diamond"></i>Input</div>
              <div class="row out"><i class="sock virtual"></i></div>
            </div>

            <div class="scroll-v"></div>
            <div class="scroll-h"></div>
          </div>

          <aside class="sidebar">
            <div class="panel">
              <div class="panel-head"><svg class="fold"><use href="#i-down"/></svg><span>Node</span><svg class="grip"><use href="#i-grip"/></svg></div>
              <label class="field"><span>Name:</span><span class="box"><svg class="ic"><use href="#i-node"/></svg><input type="text" value="Group.001"></span></label>
              <label class="field"><span>Label:</span><span class="box"><svg class="ic"><use href="#i-node"/></svg><input type="text"></span></label>
              <div class="color-row"><svg class="fold"><use href="#i-right"/></svg><label><input type="checkbox">Color</label><svg class="ic"><use href="#i-list"/></svg></div>
            </div>
            <div class="panel">
              <div class="panel-head"><svg class="fold"><use href="#i-down"/></svg><span>Properties</span><svg class="grip"><use href="#i-grip"/></svg></div>
              <div class="id-row">
                <button type="button" class="drop" aria-label="Browse group"><svg class="ic"><use href="#i-nodetree"/></svg><svg class="chev"><use href="#i-down"/></svg></button>
                <input type="text" value="horn" aria-label="Group name">
                <button type="button" class="gray dim" aria-label="Fake user"><svg class="ic"><use href="#i-shield"/></svg></button>
              </div>
              <p class="inputs-title">Inputs:</p>
              <label class="num"><span>width</span><input type="text" value="1.200"></label>
              <label class="num"><span>resolution Z</span><input type="text" value="36"></label>
              <label class="num"><span>resolution XY</span><input type="text" value="136"></label>
              <label class="num"><span>rectangular</span><input type="text" value="0.000"></label>
            </div>
          </aside>
          <div class="tabs">
            <button type="button" class="active">Node</button>
            <button type="button">Tool</button>
            <button type="button">View</button>
            <button type="button">Group</button>
          </div>
        </div>
      </section>
    </div>

    <div class="column right">

      <!-- Outliner -->
      <section class="area outliner">
        <header class="bar">
          <button type="button" class="group drop" aria-label="Editor type"><svg class="ic"><use href="#i-tree"/></svg><svg class="chev"><use href="#i-down"/></svg></button>
          <button type="button" class="group drop" aria-label="Display mode"><svg class="ic"><use href="#i-layers"/></svg><svg class="chev"><use href="#i-down"/></svg></button>
          <div class="search"><svg class="ic"><use href="#i-search"/></svg><input type="text" aria-label="Search outliner"></div>
          <button type="button" class="group drop" aria-label="Filter"><svg class="ic"><use href="#i-filter"/></svg><svg class="chev"><use href="#i-down"/></svg></button>
          <div class="group"><button type="button" class="gray" aria-label="New collection"><svg class="ic"><use href="#i-newcoll"/></svg></button></div>
        </header>
        <ul class="tree-list">
          <li><i class="arrow none"></i><svg class="ic"><use href="#i-coll"/></svg><span>Scene Collection</span></li>
          <li class="d1"><i class="arrow open"></i><svg class="ic boxed"><use href="#i-coll"/></svg><span>Collection</span>
            <div class="flags"><input type="checkbox" checked aria-label="Enable Collection"><svg class="ic"><use href="#i-eye"/></svg><svg class="ic"><use href="#i-photo"/></svg></div></li>
          <li class="d2"><i class="arrow"></i><svg class="ic amber"><use href="#i-cam"/></svg><span>Camera</span><svg class="ic mint boxed"><use href="#i-camdata"/></svg>
            <div class="flags"><svg class="ic"><use href="#i-eye"/></svg><svg class="ic"><use href="#i-photo"/></svg></div></li>
          <li class="d2"><i class="arrow"></i><svg class="ic amber boxed"><use href="#i-objmesh"/></svg><span>Cube</span><svg class="ic sky"><use href="#i-wrenchline"/></svg><svg class="ic mint"><use href="#i-mesh"/></svg>
            <div class="flags"><svg class="ic"><use href="#i-eye"/></svg><svg class="ic"><use href="#i-photo"/></svg></div></li>
          <li class="d2"><i class="arrow"></i><svg class="ic amber"><use href="#i-bulb"/></svg><span>Light</span><svg class="ic mint"><use href="#i-light"/></svg>
            <div class="flags"><svg class="ic"><use href="#i-eye"/></svg><svg class="ic"><use href="#i-photo"/></svg></div></li>
        </ul>
      </section>

      <!-- Properties -->
      <section class="area props">
        <header class="bar">
          <button type="button" class="group drop" aria-label="Editor type"><svg class="ic"><use href="#i-props"/></svg><svg class="chev"><use href="#i-down"/></svg></button>
          <div class="search"><svg class="ic"><use href="#i-search"/></svg><input type="text" aria-label="Search properties"></div>
          <div class="group"><button type="button" aria-label="Options"><svg class="chev"><use href="#i-down"/></svg></button></div>
        </header>
        <div class="area-body">
          <nav class="prop-tabs">
            <div><button type="button" aria-label="Tool"><svg class="ic"><use href="#i-tool"/></svg></button></div>
            <div>
              <button type="button" aria-label="Render"><svg class="ic"><use href="#i-render"/></svg></button>
              <button type="button" aria-label="Output"><svg class="ic"><use href="#i-output"/></svg></button>
              <button type="button" aria-label="View layer"><svg class="ic"><use href="#i-layers"/></svg></button>
              <button type="button" aria-label="Scene"><svg class="ic"><use href="#i-scene"/></svg></button>
              <button type="button" class="rose" aria-label="World"><svg class="ic"><use href="#i-world"/></svg></button>
            </div>
            <div><button type="button" class="white" aria-label="Collection"><svg class="ic"><use href="#i-archive"/></svg></button></div>
            <div>
              <button type="button" class="amber" aria-label="Object"><svg class="ic"><use href="#i-object"/></svg></button>
              <button type="button" class="active" aria-label="Modifiers"><svg class="ic"><use href="#i-wrench"/></svg></button>
              <button type="button" class="sky" aria-label="Particles"><svg class="ic"><use href="#i-particles"/></svg></button>
              <button type="button" class="sky" aria-label="Physics"><svg class="ic"><use href="#i-physics"/></svg></button>
              <button type="button" class="sky" aria-label="Constraints"><svg class="ic"><use href="#i-constraint"/></svg></button>
              <button type="button" class="mint" aria-label="Data"><svg class="ic"><use href="#i-mesh"/></svg></button>
              <button type="button" class="rose" aria-label="Material"><svg class="ic"><use href="#i-material"/></svg></button>
            </div>
            <div><button type="button" class="rose" aria-label="Texture"><svg class="ic"><use href="#i-texture"/></svg></button></div>
          </nav>
          <div class="prop-body">
            <div class="crumbs">
              <svg class="ic"><use href="#i-object"/></svg><span>Cube</span>
              <svg class="sep"><use href="#i-right"/></svg>
              <svg class="ic"><use href="#i-geo"/></svg><span>GeometryNodes</span>
              <button type="button" class="bare" aria-label="Pin"><svg class="ic"><use href="#i-pin"/></svg></button>
            </div>
            <div class="pick add-mod"><select aria-label="Add Modifier"><option>Add Modifier</option></select><svg class="chev"><use href="#i-down"/></svg></div>
            <div class="modifier">
              <div class="mod-head">
                <svg class="fold"><use href="#i-down"/></svg>
                <svg class="ic"><use href="#i-geo"/></svg>
                <div class="joined">
                  <input type="text" value="GeometryNodes" aria-label="Modifier name">
                  <button type="button" class="gray" aria-label="On cage"><svg class="ic"><use href="#i-mesh"/></svg></button>
                  <button type="button" class="on" aria-label="Edit mode"><svg class="ic"><use href="#i-editmode"/></svg></button>
                  <button type="button" class="on" aria-label="Viewport"><svg class="ic"><use href="#i-monitor"/></svg></button>
                  <button type="button" class="on" aria-label="Render"><svg class="ic"><use href="#i-photo-on"/></svg></button>
                  <button type="button" class="dark" aria-label="Modifier options"><svg class="chev"><use href="#i-down"/></svg></button>
                </div>
                <button type="button" aria-label="Remove modifier"><svg class="ic"><use href="#i-x"/></svg></button>
                <svg class="grip"><use href="#i-grip"/></svg>
              </div>
              <div class="id-row">
                <button type="button" class="drop" aria-label="Browse node tree"><svg class="ic"><use href="#i-nodetree"/></svg><svg class="chev"><use href="#i-down"/></svg></button>
                <input type="text" value="Geometry Nodes" aria-label="Node group">
                <button type="button" class="gray dim" aria-label="Fake user"><svg class="ic"><use href="#i-shield"/></svg></button>
                <button type="button" class="gray" aria-label="Duplicate"><svg class="ic"><use href="#i-dup"/></svg></button>
                <button type="button" class="gray" aria-label="Unlink"><svg class="ic"><use href="#i-x"/></svg></button>
              </div>
              <div class="mod-input">
                <label for="mod-input">Input</label>
                <input type="text" id="mod-input" value="0.000">
                <button type="button" class="gray" aria-label="Attribute"><svg class="ic"><use href="#i-attr"/></svg></button>
                <i class="dot"></i>
              </div>
              <div class="sub-head"><svg class="fold"><use href="#i-down"/></svg>Output Attributes</div>
              <div class="sub-body"><svg class="ic"><use href="#i-info"/></svg>No group output attributes connected</div>
              <div class="sub-head"><svg class="fold"><use href="#i-down"/></svg>Internal Dependencies</div>
              <div class="sub-body deps"><span>Read, Write</span>factor</div>
            </div>
          </div>
        </div>
      </section>
    </div>
  </div>

  <!-- Status bar -->
  <footer class="statusbar">
    <span class="hint"><svg class="ic"><use href="#i-mouse-l"/></svg>Select</span>
    <span class="hint"><svg class="ic"><use href="#i-mouse-m"/></svg>Pan View</span>
    <span class="hint"><svg class="ic"><use href="#i-mouse-r"/></svg>Node Context Menu</span>
    <span class="version">3.5.0</span>
  </footer>
  <div class="desktop"></div>

  <script src="script.js"></script>
</body>
</html>
```
FILE: styles.css
```css
* {
  box-sizing: border-box;
}

body {
  margin: 0;
  height: 100vh;
  overflow: hidden;
  display: flex;
  flex-direction: column;
  background: #161616;
  color: #e6e6e6;
  font-family: "DejaVu Sans Condensed", "DejaVu Sans", sans-serif;
  font-size: 11px;
  line-height: 16px;
}

button, input, select {
  font: inherit;
  color: inherit;
  margin: 0;
  padding: 0;
  border: 0;
  background: none;
  min-width: 0;
  outline: none;
}

button {
  display: flex;
  align-items: center;
  justify-content: center;
}

select {
  appearance: none;
}

svg {
  flex: none;
}

.sprite {
  position: absolute;
  width: 0;
  height: 0;
}

.ic {
  width: 15px;
  height: 15px;
}

.chev {
  width: 8px;
  height: 8px;
}

.fold {
  width: 10px;
  height: 10px;
  color: #aaa;
}

.grip {
  width: 12px;
  height: 5px;
  color: #777;
  margin-left: auto;
}

.amber { color: #c9824a; }
.mint { color: #14b88a; }
.sky { color: #5680c8; }
.rose { color: #b5555f; }
.white { color: #e0e0e0; }

/* Window title bar */
.titlebar {
  height: 31px;
  flex: none;
  display: flex;
  align-items: center;
  padding: 0 1px 0 8px;
  background: #0078d7;
  border-top: 1px solid #2a8add;
  color: #fff;
}

.titlebar .logo {
  margin-right: 6px;
}

.titlebar .orange {
  color: #f5792a;
}

.titlebar .title {
  flex: 1;
  font-family: Roboto, sans-serif;
  font-size: 12px;
}

.titlebar button {
  width: 46px;
  height: 30px;
}

.titlebar button svg {
  width: 10px;
  height: 10px;
  fill: none;
  stroke: #fff;
}

/* Top bar */
.topbar {
  height: 27px;
  flex: none;
  display: flex;
  align-items: center;
  gap: 7px;
  padding: 1px 8px 0 10px;
  background: #1d1d1d;
  border-bottom: 2px solid #161616;
}

.menu {
  display: flex;
}

.menu button {
  padding: 0 8px;
}

.topbar .menu {
  margin-left: -5px;
}

.workspaces {
  display: flex;
  align-self: flex-end;
  margin: 0 auto 0 9px;
}

.workspaces button {
  height: 19px;
  padding: 1px 10px 0;
  border-radius: 4px 4px 0 0;
  color: #999;
}

.workspaces .active {
  background: #303030;
  color: #fff;
}

.workspaces .add {
  padding: 0 3px;
}

/* Button groups */
.group {
  display: flex;
  align-items: stretch;
  height: 20px;
  border: 1px solid #3d3d3d;
  border-radius: 4px;
  background: #282828;
  overflow: hidden;
}

.group button {
  width: 19px;
}

.group .drop,
.group.drop,
.id-row .drop {
  width: 32px;
  gap: 3px;
  align-items: center;
}

.gray {
  background: #545454;
}

.group .gray + .gray {
  border-left: 1px solid #444;
}

.on {
  background: #4772b3;
  color: #fff;
}

.dim {
  color: #a6a6a6;
}

.off {
  color: #777;
}

.bare {
  color: #a0a0a0;
}

.id-block input {
  width: 119px;
  padding-left: 6px;
  background: #1d1d1d;
}

.id-block .pin {
  margin-left: -20px;
  width: 20px;
  color: #777;
}

.pick {
  display: flex;
  align-items: center;
  position: relative;
}

.pick select {
  flex: 1;
  padding: 0 16px 0 5px;
}

.pick .chev {
  position: absolute;
  right: 4px;
  pointer-events: none;
}

.pick .ic {
  margin-left: 3px;
}

.mode {
  width: 110px;
}

.orient {
  width: 80px;
}

/* Screen layout */
.screen {
  flex: 1;
  min-height: 0;
  display: grid;
  grid-template-columns: minmax(0, 1fr) 338px;
  gap: 3px;
  padding: 0 1px 0 1px;
  border-right: 1px solid #0078d7;
}

.column {
  display: grid;
  gap: 3px;
  min-height: 0;
}

.left {
  grid-template-rows: 590fr 550fr;
}

.right {
  grid-template-rows: 324fr 816fr;
}

.area {
  display: flex;
  flex-direction: column;
  min-height: 0;
  border-radius: 6px;
  overflow: hidden;
  background: #303030;
}

.bar {
  height: 26px;
  flex: none;
  display: flex;
  align-items: center;
  gap: 6px;
  padding: 0 7px;
  background: #303030;
}

.side, .mid {
  display: flex;
  align-items: center;
  gap: 5px;
}

.side {
  flex: 1;
}

.end {
  justify-content: flex-end;
}

.mid {
  margin-right: 20px;
}

.nodes .mid {
  margin-right: 26px;
}

.area-body {
  flex: 1;
  display: flex;
  min-height: 0;
}

/* Vertical region tabs */
.tabs {
  width: 20px;
  flex: none;
  display: flex;
  flex-direction: column;
  align-items: flex-start;
  gap: 4px;
  padding-top: 4px;
  background: #181818;
}

.tabs button {
  writing-mode: vertical-rl;
  transform: rotate(180deg);
  width: 17px;
  padding: 7px 0;
  background: #1f1f1f;
  border: 1px solid #3d3d3d;
  border-right: 0;
  border-radius: 4px 0 0 4px;
}

.tabs .active {
  background: #303030;
  color: #fff;
}

/* 3D viewport */
.scene {
  flex: 1;
  position: relative;
  min-width: 0;
  overflow: hidden;
}

.scene canvas {
  position: absolute;
  inset: 0;
  width: 100%;
  height: 100%;
}

.toggler {
  position: absolute;
  left: 0;
  top: 13px;
  width: 5px;
  height: 15px;
  border-radius: 0 4px 4px 0;
  background: #2a2a2a;
}

.scene-info {
  position: absolute;
  left: 9px;
  top: 7px;
  margin: 0;
  line-height: 18px;
  color: #fff;
  text-shadow: 0 1px 2px #000;
}

.axis-gizmo {
  position: absolute;
  right: 209px;
  top: 8px;
  width: 80px;
  height: 84px;
}

.axis-gizmo text {
  font-size: 11px;
  font-weight: bold;
  text-anchor: middle;
  fill: #151515;
}

.nav-buttons {
  position: absolute;
  right: 207px;
  top: 91px;
  display: flex;
  flex-direction: column;
  gap: 3px;
}

.nav-buttons button {
  width: 27px;
  height: 27px;
  border-radius: 50%;
  background: #282828;
}

.panel-head {
  display: flex;
  align-items: center;
  gap: 5px;
  height: 25px;
  padding: 0 6px 0 8px;
  color: #f0f0f0;
}

.transform {
  position: absolute;
  right: 7px;
  top: 1px;
  width: 184px;
  border-radius: 4px;
  background: #3d3d3d;
}

/* Node editor */
.nodes .bar {
  background: #232323;
}

.graph {
  flex: 1;
  position: relative;
  min-width: 0;
  overflow: hidden;
  background: #1d1d1d;
}

.links {
  position: absolute;
  inset: 0;
  width: 100%;
  height: 100%;
}

.tools {
  position: absolute;
  left: 7px;
  top: 7px;
  display: flex;
  flex-direction: column;
  gap: 5px;
}

.tools button {
  width: 42px;
  height: 35px;
  border: 1px solid #3d3d3d;
  border-radius: 4px;
  background: #282828;
}

.tools .active {
  background: #4772b3;
}

.tools svg {
  width: 40px;
  height: 34px;
}

.crumbs {
  display: flex;
  align-items: center;
}

.crumbs .ic {
  margin-right: 9px;
}

.crumbs .sep {
  width: 10px;
  height: 10px;
  margin: 0 8px 0 12px;
}

.graph > .crumbs {
  position: absolute;
  left: 74px;
  top: 14px;
}

.scroll-v {
  position: absolute;
  right: 3px;
  top: 10px;
  bottom: 12px;
  width: 3px;
  background: #333;
}

.scroll-h {
  position: absolute;
  left: 8px;
  right: 6px;
  bottom: 2px;
  height: 3px;
  background: #333;
}

.node {
  position: absolute;
  width: 100px;
  padding-bottom: 2px;
  border-radius: 3px;
  background: #303030;
  box-shadow: 0 1px 6px 1px rgba(0, 0, 0, 0.7);
  font-size: 8px;
  line-height: 14px;
}

.n-spline { left: 77px; top: 81px; }
.n-curve { left: 204px; top: 44px; width: 502px; }
.n-horn { left: 750px; top: 44px; }
.n-bbox { left: 873px; top: 107px; }
.n-scale1 { left: 992px; top: 20px; }
.n-scale2 { left: 1102px; top: 19px; }
.n-output { left: 1215px; top: 20px; }
.n-quad { left: 478px; top: 351px; }
.n-input { left: 590px; top: 349px; }

.node h3 {
  display: flex;
  align-items: center;
  gap: 4px;
  height: 14px;
  margin: 0 0 3px;
  padding: 0 5px 0 7px;
  border-radius: 3px 3px 0 0;
  font-size: 8px;
  font-weight: normal;
  white-space: nowrap;
}

.node h3 .ic {
  width: 11px;
  height: 11px;
  margin-left: auto;
}

.node h3 .chev {
  color: #bbb;
}

.node .red { background: #83314a; }
.node .blue { background: #246283; }
.node h3.green { background: #1d725e; }
.node .olive { background: #344621; }
.node .black { background: #1d1d1d; }

.node-tag {
  position: absolute;
  left: 751px;
  top: 30px;
  display: flex;
  align-items: center;
  gap: 4px;
  width: 95px;
  height: 14px;
  padding: 0 2px;
  background: #232323;
  border: 1px solid #111;
  font-size: 8px;
}

.node-tag .ic {
  width: 11px;
  height: 11px;
}

.row {
  position: relative;
  display: flex;
  align-items: center;
  height: 16px;
  padding: 0 8px;
}

.out {
  justify-content: flex-end;
}

.spaced {
  margin-top: 2px;
}

.sock {
  position: absolute;
  left: -3px;
  top: 5px;
  width: 6px;
  height: 6px;
  border-radius: 50%;
  background: #a1a1a1;
  color: #a1a1a1;
  box-shadow: 0 0 0 1px #151515;
}

.out .sock {
  left: auto;
  right: -3px;
}

.diamond {
  width: 5px;
  height: 5px;
  border-radius: 0;
  transform: rotate(45deg);
}

.sock.green { background: #598c5c; color: #598c5c; }
.sock.teal { background: #00d6a3; }
.sock.violet { background: #6363c7; color: #6f7fe0; }
.sock.light { color: #d0d0d0; }

.sock.open {
  background: #1d1d1d;
  border: 1px solid currentColor;
}

.sock.virtual {
  width: 7px;
  height: 7px;
  border: 1px solid #8a8a8a;
  background: #262626;
}

.num {
  display: flex;
  align-items: center;
  flex: 1;
  min-width: 0;
  background: #545454;
  border-radius: 2px;
}

.num span {
  flex: none;
}

.num input {
  flex: 1;
  width: 0;
  text-align: right;
}

.node .num {
  height: 13px;
  padding: 0 10px;
}

.node .group {
  height: 14px;
  flex: 1;
  border-radius: 2px;
}

.node .group button {
  width: 13px;
}

.node .group .drop {
  width: 22px;
  gap: 1px;
}

.node .group .ic {
  width: 11px;
  height: 11px;
}

.node .group .chev {
  width: 7px;
  height: 7px;
}

.tree {
  margin: 6px 0 1px;
}

.tree input {
  flex: 1;
  width: 0;
  padding-left: 5px;
  background: #1d1d1d;
}

.curve-tools {
  margin-top: 6px;
  justify-content: flex-end;
}

.node .curve-tools .group {
  flex: none;
}

.node .curve-tools button {
  width: 14px;
}

.curve {
  display: block;
  width: calc(100% - 15px);
  height: 113px;
  margin: 2px 7px 5px 8px;
  background: #545454;
}

.point .num {
  border-radius: 0;
  border-left: 1px solid #3a3a3a;
}

.factor {
  margin-top: 2px;
}

.slider {
  background: linear-gradient(to right, #4772b3 70.6%, #545454 70.6%);
}

.selects {
  display: flex;
  flex-direction: column;
  gap: 4px;
  padding: 0 8px;
  margin: 6px 0 3px;
}

.selects .pick {
  height: 14px;
  border: 1px solid #3d3d3d;
  border-radius: 3px;
  background: #282828;
}

.selects select {
  padding-left: 4px;
}

.selects .pick .chev {
  right: 0;
}

.vector {
  display: flex;
  flex-direction: column;
  gap: 1px;
  padding: 0 8px 2px;
}

.vector input {
  height: 13px;
  text-align: center;
  background: #545454;
}

/* Node editor sidebar */
.sidebar {
  width: 248px;
  flex: none;
  padding: 1px 7px 0 8px;
  background: #303030;
}

.panel {
  margin-bottom: 2px;
  padding: 0 9px 0;
  border-radius: 4px;
  background: #3d3d3d;
}

.panel .panel-head {
  margin: 0 -9px 9px;
}

.field {
  display: flex;
  align-items: center;
  height: 18px;
  margin-bottom: 7px;
  color: #c8c8c8;
}

.field > span:first-child {
  width: 53px;
}

.field .box {
  flex: 1;
  display: flex;
  align-items: center;
  gap: 6px;
  height: 18px;
  padding-left: 4px;
  border-radius: 3px;
  background: #1d1d1d;
  color: #e6e6e6;
}

.field input {
  flex: 1;
}

.color-row {
  display: flex;
  align-items: center;
  height: 28px;
  padding: 2px 19px 0 13px;
  justify-content: space-between;
}

.color-row label {
  flex: 1;
  display: flex;
  align-items: center;
  gap: 4px;
  padding-left: 3px;
}

.color-row input {
  appearance: none;
  width: 12px;
  height: 12px;
  border-radius: 2px;
  background: #545454;
}

.id-row {
  display: flex;
  height: 18px;
  gap: 1px;
  border-radius: 3px;
  overflow: hidden;
}

.id-row .drop {
  width: 30px;
  background: #282828;
}

.id-row input {
  flex: 1;
  padding-left: 7px;
  background: #1d1d1d;
}

.id-row .gray {
  width: 19px;
}

.inputs-title {
  margin: 19px 0 8px;
  color: #c8c8c8;
}

.panel .num {
  height: 18px;
  margin-bottom: 7px;
  padding: 0 13px 0 15px;
  border-radius: 3px;
}

.panel:last-child {
  padding-bottom: 1px;
}

/* Outliner */
.outliner,
.outliner .bar {
  background: #282828;
}

.search {
  display: flex;
  align-items: center;
  height: 20px;
  width: 110px;
  padding-left: 3px;
  border: 1px solid #3d3d3d;
  border-radius: 4px;
  background: #1d1d1d;
}

.search input {
  flex: 1;
}

.outliner .search {
  margin: 0 auto 0 20px;
}

.tree-list {
  flex: 1;
  list-style: none;
  margin: 1px 0 0;
  padding: 0;
  background: repeating-linear-gradient(#282828 0 20px, #2b2b2b 20px 40px);
}

.tree-list li {
  display: flex;
  align-items: center;
  height: 20px;
  padding: 0 9px 0 5px;
  color: #c8c8c8;
}

.tree-list .d1 { padding-left: 25px; }
.tree-list .d2 { padding-left: 45px; }

.tree-list .ic {
  color: #e0e0e0;
  margin: 0 3px;
}

.tree-list .ic.amber { color: #c9824a; }
.tree-list .ic.mint { color: #14b88a; }
.tree-list .ic.sky { color: #5680c8; }

.tree-list .boxed {
  width: 19px;
  height: 17px;
  margin: 0 1px;
  padding: 1px 2px;
  border-radius: 4px;
  background: #555;
}

.tree-list span {
  margin: 0 19px 0 4px;
}

.arrow {
  width: 6px;
  height: 7px;
  margin: 0 3px;
  background: #aaa;
  clip-path: polygon(0 0, 100% 50%, 0 100%);
}

.arrow.none {
  visibility: hidden;
}

.arrow.open {
  clip-path: polygon(0 0, 100% 0, 50% 100%);
}

.flags {
  margin-left: auto;
  display: flex;
  align-items: center;
}

.flags input {
  appearance: none;
  width: 10px;
  height: 10px;
  margin-right: 4px;
  border-radius: 1px;
  background: #e6e6e6;
}

.flags input:checked::after {
  content: "✓";
  display: block;
  font: bold 10px/10px "DejaVu Sans", sans-serif;
  text-align: center;
  color: #222;
}

/* Properties */
.props .bar {
  padding-left: 8px;
}

.props .search {
  margin: 0 auto 0 70px;
}

.prop-tabs {
  width: 28px;
  flex: none;
  padding: 6px 0 0 2px;
  background: #1d1d1d;
  color: #b0b0b0;
}

.prop-tabs div {
  padding: 2px 0 7px;
  border-bottom: 1px solid #181818;
}

.prop-tabs div:first-child {
  padding-bottom: 6px;
}

.prop-tabs button {
  width: 26px;
  height: 26px;
  margin-bottom: 2px;
  border-radius: 4px 0 0 4px;
}

.prop-tabs div button:last-child {
  margin-bottom: 0;
}

.prop-tabs .active {
  background: #303030;
  color: #71a8ff;
}

.prop-body {
  flex: 1;
  padding: 10px 8px 0;
}

.prop-body .crumbs {
  height: 16px;
  padding: 0 2px;
}

.prop-body .crumbs .bare {
  margin-left: auto;
}

.prop-body .crumbs .bare .ic {
  margin: 0;
}

.add-mod {
  height: 20px;
  margin: 17px 0 10px;
  border: 1px solid #3d3d3d;
  border-radius: 4px;
  background: #282828;
}

.modifier {
  border: 1px solid #4772b3;
  border-radius: 4px;
  background: #3d3d3d;
  overflow: hidden;
}

.mod-head {
  display: flex;
  align-items: center;
  gap: 5px;
  height: 25px;
  padding: 0 4px 0 6px;
}

.mod-head .joined {
  flex: 1;
  display: flex;
  gap: 1px;
  height: 18px;
  margin-left: 6px;
  border-radius: 3px;
  overflow: hidden;
}

.joined input {
  flex: 1;
  width: 0;
  padding-left: 6px;
  background: #1d1d1d;
}

.joined button {
  width: 19px;
}

.dark {
  background: #282828;
}

.mod-head .grip {
  margin-left: 9px;
}

.modifier .id-row {
  margin: 8px 8px 7px;
}

.mod-input {
  display: flex;
  align-items: center;
  gap: 1px;
  height: 18px;
  padding: 0 8px;
}

.mod-input label {
  width: 98px;
  margin-right: 9px;
  text-align: right;
}

.mod-input input {
  flex: 1;
  height: 18px;
  text-align: center;
  border-radius: 3px 0 0 3px;
  background: #545454;
}

.mod-input button {
  width: 19px;
  height: 18px;
}

.dot {
  width: 4px;
  height: 4px;
  margin: 0 7px 0 8px;
  border-radius: 50%;
  background: #ddd;
}

.sub-head {
  display: flex;
  align-items: center;
  gap: 4px;
  height: 25px;
  padding-left: 21px;
}

.mod-input + .sub-head {
  margin-top: 9px;
}

.sub-body {
  display: flex;
  align-items: center;
  gap: 8px;
  height: 36px;
  padding-left: 10px;
  background: #363636;
}

.deps {
  gap: 11px;
  padding-left: 56px;
}

.deps span {
  color: #8a8a8a;
}

/* Status bar */
.statusbar {
  height: 19px;
  flex: none;
  display: flex;
  align-items: center;
  margin-top: 2px;
  padding: 0 9px 0 9px;
  background: #1d1d1d;
  color: #999;
}

.hint {
  display: flex;
  align-items: center;
  gap: 10px;
  width: 211px;
}

.version {
  margin-left: auto;
}

.desktop {
  height: 3px;
  flex: none;
  border-top: 1px solid #0078d7;
  background: linear-gradient(to right, #000 240px, #777 409px, #1a1a1a 409px);
}
```
FILE: script.js
```javascript
const canvas = document.getElementById('scene');
const ctx = canvas.getContext('2d');

const CAM_DIST = 13.94;   // camera distance to the origin
const CAM_X = 3.34;       // camera offset to the right of the origin
const CAM_Z = 2.2;        // camera height
const SCALE = 79.64;      // pixels per unit at the origin

// horn profile as [height, radius]
const PROFILE = [
  [0, 0.126], [0.3, 0.175], [0.6, 0.23], [1.19, 0.365], [1.6, 0.475], [2.02, 0.6],
  [2.45, 0.755], [2.86, 0.94], [3.3, 1.2], [3.7, 1.5], [3.95, 1.7], [4.14, 1.88],
  [4.28, 2.02], [4.41, 2.2], [4.54, 2.45], [4.675, 2.87], [4.81, 3.87]
];
const HORN_HEIGHT = 4.81;
const HORN_DEPTH = 0.78;  // y radius relative to x radius

let vpX, vpY;

function project(x, y, z) {
  const s = SCALE * CAM_DIST / (CAM_DIST + y);
  return [vpX + (x - CAM_X) * s, vpY - (z - CAM_Z) * s];
}

function radiusAt(z) {
  for (let i = 1; i < PROFILE.length; i++) {
    const [z0, r0] = PROFILE[i - 1];
    const [z1, r1] = PROFILE[i];
    if (z <= z1 + 0.001) return r0 + (r1 - r0) * (z - z0) / (z1 - z0);
  }
  return PROFILE[PROFILE.length - 1][1];
}

function line(points, color, width) {
  ctx.beginPath();
  points.forEach(([x, y], i) => i ? ctx.lineTo(x, y) : ctx.moveTo(x, y));
  ctx.strokeStyle = color;
  ctx.lineWidth = width || 1;
  ctx.stroke();
}

// vertical gradient that fades out towards the horizon
function fade(rgb, alpha, from, to) {
  const g = ctx.createLinearGradient(0, vpY + from, 0, vpY + to);
  g.addColorStop(0, `rgba(${rgb}, 0)`);
  g.addColorStop(1, `rgba(${rgb}, ${alpha})`);
  return g;
}

function drawGrid(w) {
  const near = -4;
  const fine = fade('84, 104, 118', 0.85, 45, 170);
  const coarse = fade('84, 104, 118', 0.9, 28, 150);
  const sub = fade('84, 104, 118', 0.22, 165, 235);

  for (let i = -160; i <= 200; i++) {
    line([project(i / 10, near, 0), project(i / 10, 0.5, 0)], sub);
  }
  for (let i = -40; i < 5; i++) {
    const y = project(0, i / 10, 0)[1];
    line([[0, y], [w, y]], sub);
  }
  for (let i = -90; i <= 110; i++) {
    if (i === 0) continue;
    const big = i % 10 === 0;
    line([project(i, near, 0), project(i, 90, 0)], big ? coarse : fine, big ? 1.6 : 1.2);
  }
  for (let i = -3; i <= 70; i++) {
    if (i === 0) continue;
    const y = project(0, i, 0)[1];
    line([[0, y], [w, y]], i % 10 === 0 ? coarse : fine, 1.5);
  }

  // haze where the far lines merge
  const haze = ctx.createLinearGradient(0, vpY + 26, 0, vpY + 110);
  haze.addColorStop(0, 'rgba(84, 104, 118, 0)');
  haze.addColorStop(0.3, 'rgba(84, 104, 118, 0.22)');
  haze.addColorStop(0.5, 'rgba(84, 104, 118, 0.12)');
  haze.addColorStop(1, 'rgba(84, 104, 118, 0)');
  ctx.fillStyle = haze;
  ctx.fillRect(0, vpY + 26, w, 84);

  line([project(-60, 0, 0), project(60, 0, 0)], '#864550', 1.3);
  line([project(0, near, 0), project(0, 80, 0)], fade('99, 145, 62', 1, 25, 120), 1.7);
}

function hornPoint(i, j, rings, sides) {
  const z = HORN_HEIGHT * i / rings;
  const r = radiusAt(z);
  const a = j / sides * Math.PI * 2;
  return project(Math.cos(a) * r, Math.sin(a) * r * HORN_DEPTH, z);
}

function drawHorn() {
  const rings = 36;
  const sides = 136;
  const color = 'rgba(56, 34, 35, 0.8)';

  for (let i = 0; i <= rings; i++) {
    const pts = [];
    for (let j = 0; j <= sides; j++) pts.push(hornPoint(i, j, rings, sides));
    line(pts, color);
  }
  for (let j = 0; j < sides; j++) {
    const pts = [];
    for (let i = 0; i <= rings; i++) pts.push(hornPoint(i, j, rings, sides));
    line(pts, color, 0.9);
  }
}

function drawLamp() {
  const [ox, oy] = project(0, 0, 0);
  const x = ox - 34;
  const y = oy - 46;
  line([[x, y], [x, oy + 1]], '#222');
  ctx.setLineDash([3, 3]);
  ctx.strokeStyle = '#0c0c0c';
  [4, 8, 12].forEach((r) => {
    ctx.beginPath();
    ctx.arc(x, y, r, 0, Math.PI * 2);
    ctx.stroke();
  });
  ctx.setLineDash([]);
  ctx.fillStyle = '#0c0c0c';
  ctx.fillRect(x - 5, y - 1, 6, 6);
}

function draw() {
  const w = canvas.width = canvas.clientWidth;
  const h = canvas.height = canvas.clientHeight;
  vpX = w / 2 + 3;
  vpY = Math.round(h * 0.59);

  const bg = ctx.createRadialGradient(w / 2, h / 2, 0, w / 2, h / 2, w * 0.6);
  bg.addColorStop(0, '#3e3e3e');
  bg.addColorStop(1, '#343434');
  ctx.fillStyle = bg;
  ctx.fillRect(0, 0, w, h);

  drawGrid(w);
  drawHorn();
  drawLamp();

  const [x, y] = project(0, 0, 0);
  ctx.fillStyle = '#ffa030';
  ctx.beginPath();
  ctx.arc(x, y, 2.2, 0, Math.PI * 2);
  ctx.fill();
}

window.addEventListener('resize', draw);
draw();
```
